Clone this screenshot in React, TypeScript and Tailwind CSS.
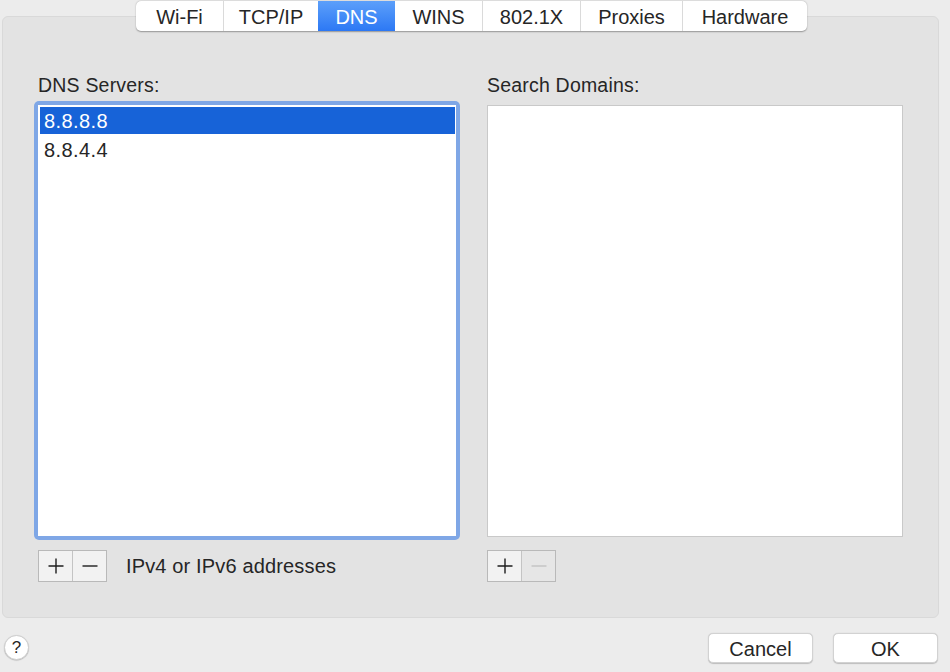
import React from 'react';

const tabs = [
  { label: 'Wi-Fi', w: 87 },
  { label: 'TCP/IP', w: 95 },
  { label: 'DNS', w: 77 },
  { label: 'WINS', w: 87 },
  { label: '802.1X', w: 98 },
  { label: 'Proxies', w: 102 },
  { label: 'Hardware', w: 125 },
];

const servers = ['8.8.8.8', '8.8.4.4'];

// +/- segmented button pair under each list
const AddRemove = ({ removeDisabled = false }: { removeDisabled?: boolean }) => (
  <div className="flex h-[32px] border border-[#b9b9b9] bg-[#f2f2f2]">
    <button className="flex w-[33px] items-center justify-center">
      <svg width="18" height="18" viewBox="0 0 18 18">
        <path d="M9 1.5v15M1.5 9h15" stroke="#1e1e1e" strokeWidth="1.4" />
      </svg>
    </button>
    <div className="w-px bg-[#c4c4c4]" />
    <button className={`flex w-[33px] items-center justify-center ${removeDisabled ? 'bg-[#e6e6e6]' : ''}`}>
      <svg width="18" height="18" viewBox="0 0 18 18">
        <path d="M1.5 9h15" stroke={removeDisabled ? '#c2c2c2' : '#1e1e1e'} strokeWidth="1.4" />
      </svg>
    </button>
  </div>
);

export default function App() {
  return (
    <div
      className="flex h-[672px] w-[950px] flex-col overflow-hidden bg-[#ececec] pl-[2px] pr-[11px] text-[#262626]"
      style={{ fontFamily: '"Liberation Sans", Arial, sans-serif' }}
    >
      {/* tab strip */}
      <div className="relative z-10 flex justify-center pl-[2px] pt-[1px]">
        <div className="flex h-[30px] overflow-hidden rounded-[5px] bg-white shadow-[0_0.5px_1.5px_rgba(0,0,0,0.35)]">
          {tabs.map((t, i) => (
            <div
              key={t.label}
              style={{ width: t.w }}
              className={`flex items-center justify-center pt-[1px] text-[20px] ${
                t.label === 'DNS'
                  ? 'bg-gradient-to-b from-[#5c9ffa] to-[#2c78f4] text-white'
                  : i > 0 && tabs[i - 1].label !== 'DNS'
                  ? 'border-l border-[#dadada]'
                  : ''
              }`}
            >
              {t.label}
            </div>
          ))}
        </div>
      </div>

      {/* main panel */}
      <div className="-mt-[15px] h-[602px] rounded-[6px] border border-[#d9d9d9] bg-[#e3e3e3] pl-[31px] pt-[56px]">
        <div className="grid grid-cols-[426px_416px] gap-x-[27px]">
          <div className="flex flex-col">
            <div className="pl-[4px] text-[19.5px] leading-[24px] tracking-[0.2px]">DNS Servers:</div>
            <div className="mt-[4px] h-[439px] rounded-[5px] bg-[#7fa7e6] p-[4px]">
              <div className="flex h-full flex-col gap-[2px] bg-white py-[2px] pl-[2px] pr-[1px]">
                {servers.map((s, i) => (
                  <div
                    key={s}
                    className={`flex h-[27px] items-center pl-[4px] text-[20px] tracking-[0.4px] ${
                      i === 0 ? 'bg-[#1763d8] text-white' : ''
                    }`}
                  >
                    {s}
                  </div>
                ))}
              </div>
            </div>
            <div className="mt-[10px] flex items-center">
              <div className="pl-[4px]">
                <AddRemove />
              </div>
              <span className="ml-[19px] text-[20px] tracking-[0.15px]">IPv4 or IPv6 addresses</span>
            </div>
          </div>

          <div className="flex flex-col">
            <div className="text-[19.5px] leading-[24px] tracking-[0.2px]">Search Domains:</div>
            <div className="mt-[8px] h-[432px] border border-[#c9c9c9] bg-white" />
            <div className="mt-[13px] flex">
              <AddRemove removeDisabled />
            </div>
          </div>
        </div>
      </div>

      {/* footer */}
      <div className="flex flex-1 items-center justify-between pl-[2px] pr-[1px] pt-[5px]">
        <button className="flex h-[25px] w-[25px] items-center justify-center rounded-full border border-[#cfcfcf] bg-white text-[17px] shadow-[0_0.5px_1px_rgba(0,0,0,0.25)]">
          ?
        </button>
        <div className="flex gap-[20px]">
          {['Cancel', 'OK'].map((b) => (
            <button
              key={b}
              className="h-[30px] w-[105px] rounded-[5px] border border-[#d2d2d2] bg-white text-[20px] shadow-[0_0.5px_1px_rgba(0,0,0,0.2)]"
            >
              {b}
            </button>
          ))}
        </div>
      </div>
    </div>
  );
}
